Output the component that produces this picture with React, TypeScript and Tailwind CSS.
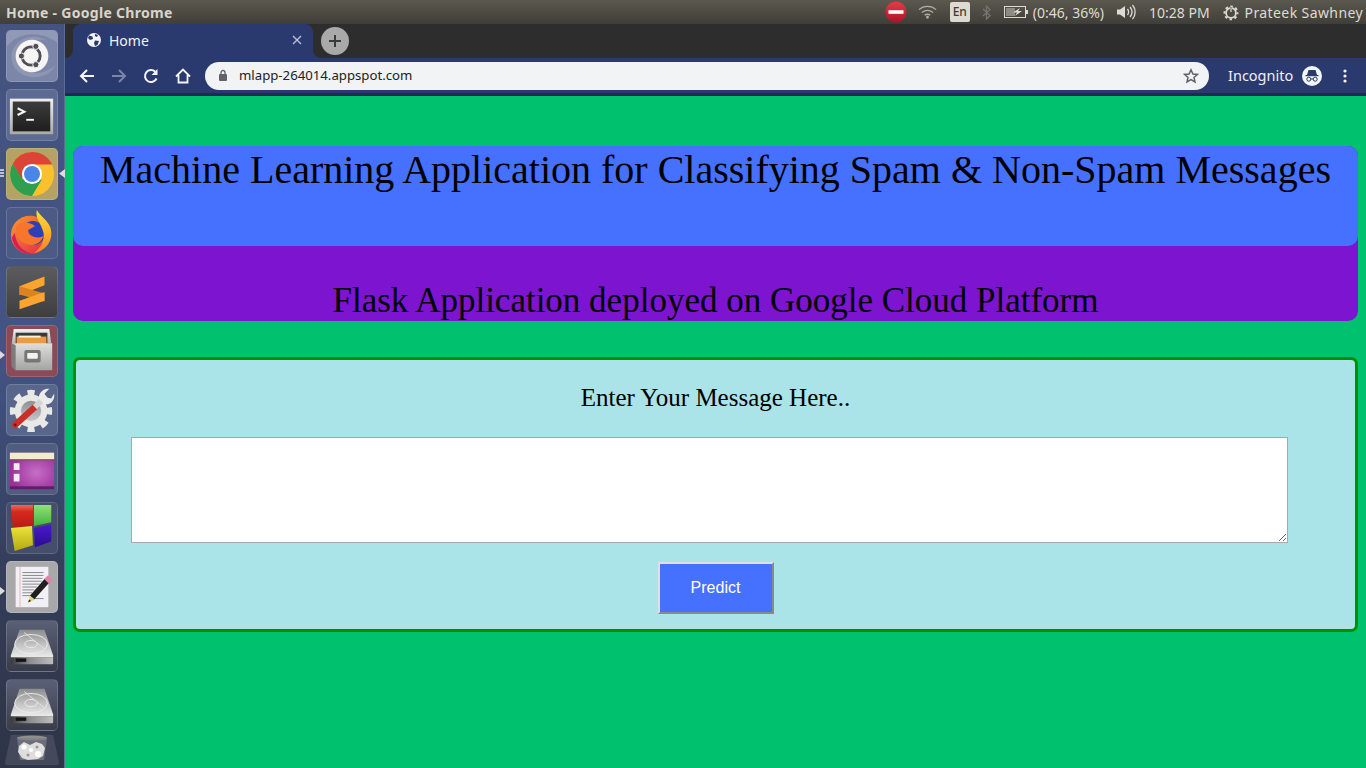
import React from "react";

const Tile = ({ children, className = "" }: { children: React.ReactNode; className?: string }) => (
  <div className={`w-[52px] h-[52px] rounded-[5px] border border-white/15 flex items-center justify-center shrink-0 overflow-hidden ${className}`}>
    {children}
  </div>
);

const UbuntuIcon = () => (
  <svg width="52" height="52" viewBox="0 0 52 52">
    <path d="M0 16C12 0 36 0 52 12V0H0Z" fill="#ffffff" opacity=".16" />
    <path d="M5 30C2 12 24 -1 42 10C30 6 12 14 15 30C18 46 36 48 50 36C42 54 8 52 5 30Z" fill="#ffffff" opacity=".14" />
    <circle cx="26" cy="26" r="17" fill="#f6f5f3" />
    <circle cx="25" cy="26" r="9.5" fill="none" stroke="#4f4f58" strokeWidth="3" />
    <circle cx="30" cy="16" r="3.2" fill="#4f4f58" stroke="#f6f5f3" strokeWidth="1" />
    <circle cx="15" cy="26" r="3.2" fill="#4f4f58" stroke="#f6f5f3" strokeWidth="1" />
    <circle cx="30" cy="35" r="3.2" fill="#4f4f58" stroke="#f6f5f3" strokeWidth="1" />
  </svg>
);

const TerminalIcon = () => (
  <svg width="52" height="52" viewBox="0 0 52 52">
    <defs>
      <linearGradient id="termFrame" x1="0" y1="0" x2="0" y2="1"><stop offset="0" stopColor="#f0f0ee" /><stop offset="1" stopColor="#a8a8a6" /></linearGradient>
      <linearGradient id="termBg" x1="0" y1="0" x2="0" y2="1"><stop offset="0" stopColor="#3c3c3c" /><stop offset="1" stopColor="#1e1e1e" /></linearGradient>
    </defs>
    <rect x="3" y="9" width="45" height="37" fill="url(#termFrame)" />
    <rect x="6" y="12" width="39" height="31" fill="url(#termBg)" />
    <path d="M11 19l7 3.5-7 3.5" fill="none" stroke="#f4f4f4" strokeWidth="2.2" />
    <rect x="20" y="30" width="8" height="2" fill="#f4f4f4" />
  </svg>
);

const ChromeIcon = () => (
  <svg width="52" height="52" viewBox="0 0 52 52">
    <circle cx="26" cy="26" r="23" fill="#fbc02d" />
    <path d="M26 3A23 23 0 0 0 6 15L15 31 26 16H47A23 23 0 0 0 26 3Z" fill="#db4437" />
    <path d="M6 15A23 23 0 0 0 26 49L36 32 16 31Z" fill="#2e9e4f" />
    <circle cx="26" cy="26" r="10.5" fill="#fff" />
    <circle cx="26" cy="26" r="8.3" fill="#4a86e8" />
  </svg>
);

const FirefoxIcon = () => (
  <svg width="52" height="52" viewBox="0 0 52 52">
    <defs>
      <linearGradient id="ffBody" x1="0" y1="0" x2="1" y2="1"><stop offset="0" stopColor="#ff9a2c" /><stop offset="1" stopColor="#e0214f" /></linearGradient>
      <linearGradient id="ffTail" x1="0" y1="0" x2="0" y2="1"><stop offset="0" stopColor="#ffe22c" /><stop offset="1" stopColor="#f7812c" /></linearGradient>
    </defs>
    <circle cx="24" cy="28" r="20" fill="url(#ffBody)" />
    <circle cx="27" cy="26" r="12.5" fill="#2f3fb5" />
    <path d="M10 18C15 14 24 14 29 19L22 23C22 29 30 33 38 29C35 38 24 41 17 36C10 31 8 24 10 18Z" fill="#f7762c" />
    <path d="M31 2C34 8 42 12 45 20C49 32 42 44 28 47C36 41 39 33 38 26C36 16 29 12 31 2Z" fill="url(#ffTail)" />
    <path d="M5 31C7 42 16 49 28 48C18 46 10 40 8 26Z" fill="#d81f55" />
  </svg>
);

const SublimeIcon = () => (
  <svg width="52" height="52" viewBox="0 0 52 52">
    <path d="M13 20L39 10V19L13 29Z" fill="#fba52f" />
    <path d="M13 28.5L39 36V27.5L13 20Z" fill="#d98420" />
    <path d="M13 35L39 26V35L13 44Z" fill="#fba52f" />
  </svg>
);

const FilesIcon = () => (
  <svg width="52" height="52" viewBox="0 0 52 52">
    <defs>
      <linearGradient id="fileFront" x1="0" y1="0" x2="0" y2="1"><stop offset="0" stopColor="#dededc" /><stop offset="1" stopColor="#a4a4a2" /></linearGradient>
      <linearGradient id="fileTop" x1="0" y1="0" x2="0" y2="1"><stop offset="0" stopColor="#f2f2f0" /><stop offset="1" stopColor="#b4b4b2" /></linearGradient>
    </defs>
    <path d="M7 3H44L46 18H5Z" fill="url(#fileTop)" />
    <rect x="9" y="7" width="33" height="12" fill="#3a3a3a" />
    <rect x="10" y="11" width="31" height="9" fill="#ec9a44" />
    <rect x="12" y="10" width="23" height="2" fill="#fff2dc" />
    <path d="M5 18H47V46H9L5 42Z" fill="url(#fileFront)" />
    <path d="M5 18L9 20V46L5 42Z" fill="#7c7c7a" />
    <rect x="18" y="25" width="17" height="13" rx="2" fill="#777775" />
    <rect x="21" y="28" width="11" height="6" rx="1" fill="#f2f2f0" />
  </svg>
);

const SettingsIcon = () => (
  <svg width="52" height="52" viewBox="0 0 52 52">
    <defs>
      <linearGradient id="hole" x1="0" y1="0" x2="0" y2="1"><stop offset="0" stopColor="#8d8f96" /><stop offset="1" stopColor="#c6c7cb" /></linearGradient>
    </defs>
    <circle cx="25" cy="27" r="17" fill="#e8e8e6" />
    <circle cx="25" cy="27" r="19" fill="none" stroke="#e8e8e6" strokeWidth="6" pathLength="16" strokeDasharray="1 1" strokeDashoffset="0.5" />
    <circle cx="25" cy="27" r="10.5" fill="url(#hole)" />
    <path d="M8.5 41.5L30 22" stroke="#c92f27" strokeWidth="6.5" strokeLinecap="round" />
    <circle cx="8.5" cy="41.5" r="1.5" fill="#7a1712" />
    <path d="M29 23L37 15" stroke="#d4d4d4" strokeWidth="6" />
    <path d="M33 14C33 8 38 3 44 4L39 9L41 13L46 14L49 9C50 15 46 21 39 20Z" fill="#ececec" />
  </svg>
);

const WorkspaceIcon = () => (
  <svg width="52" height="52" viewBox="0 0 52 52">
    <defs>
      <radialGradient id="wsBg" cx=".6" cy=".55" r=".6"><stop offset="0" stopColor="#c66fc6" /><stop offset="1" stopColor="#9a2f9a" /></radialGradient>
    </defs>
    <rect x="3" y="9" width="46" height="38" rx="2" fill="url(#wsBg)" />
    <rect x="3" y="9" width="46" height="7" fill="#f1eccd" />
    <rect x="3" y="16" width="46" height="1" fill="#6a5a40" />
    <rect x="3" y="44" width="46" height="3" fill="#5f1f66" />
    <rect x="7" y="20" width="6" height="7" fill="#f1eef3" />
    <rect x="7" y="31" width="6" height="8" fill="#f1eef3" />
  </svg>
);

const BlocksIcon = () => (
  <svg width="52" height="52" viewBox="0 0 52 52">
    <defs>
      <linearGradient id="bRed" x1="0" y1="0" x2="0" y2="1"><stop offset="0" stopColor="#ef6a5c" /><stop offset=".3" stopColor="#d8281f" /><stop offset="1" stopColor="#b91a16" /></linearGradient>
      <linearGradient id="bGreen" x1="0" y1="0" x2="0" y2="1"><stop offset="0" stopColor="#8fe07c" /><stop offset="1" stopColor="#44b43a" /></linearGradient>
      <linearGradient id="bYellow" x1="0" y1="0" x2="0" y2="1"><stop offset="0" stopColor="#ece33c" /><stop offset="1" stopColor="#b4aa12" /></linearGradient>
      <linearGradient id="bBlue" x1="0" y1="0" x2="0" y2="1"><stop offset="0" stopColor="#4a1bcc" /><stop offset="1" stopColor="#2c0a96" /></linearGradient>
    </defs>
    <path d="M4 2H27V24L6 26Z" fill="url(#bRed)" />
    <path d="M28 2H46V20L28 24Z" fill="url(#bGreen)" />
    <path d="M4 26L26 24L27 44L8 50Z" fill="url(#bYellow)" />
    <path d="M28 26L46 22V40L29 46Z" fill="url(#bBlue)" />
  </svg>
);

const EditorIcon = () => (
  <svg width="52" height="52" viewBox="0 0 52 52">
    <rect x="9" y="5" width="34" height="42" fill="#f0f0f5" />
    <rect x="13" y="5" width="1" height="42" fill="#eeb4b4" />
    <path d="M16 11H38M16 14H38M16 17H37M16 20H36M16 23H34M16 26H31M16 29H28M16 32H26M16 35H24M29 38H38" stroke="#85858c" strokeWidth="1" />
    <path d="M26 37L42 19" stroke="#1f1f1f" strokeWidth="6" />
    <path d="M41 20L45 16" stroke="#e47fae" strokeWidth="6.5" />
    <path d="M22 42L24 35L29 39Z" fill="#e7cf6a" />
    <path d="M22 42L23 39L25 40.5Z" fill="#222" />
  </svg>
);

const DriveIcon = ({ id }: { id: string }) => (
  <svg width="52" height="52" viewBox="0 0 52 52">
    <defs>
      <linearGradient id={id} x1="0" y1="0" x2="0" y2="1"><stop offset="0" stopColor="#8c8c8c" /><stop offset=".55" stopColor="#c4c4c4" /><stop offset="1" stopColor="#ececec" /></linearGradient>
      <linearGradient id={`${id}F`} x1="0" y1="0" x2="1" y2="0"><stop offset="0" stopColor="#3a3a3a" /><stop offset=".45" stopColor="#8e8e8e" /><stop offset="1" stopColor="#bdbdbd" /></linearGradient>
    </defs>
    <path d="M13 9H39L48 36V38H4V36Z" fill={`url(#${id})`} />
    <path d="M4 38H48V44Q48 45 47 45H5Q4 45 4 44Z" fill={`url(#${id}F)`} />
    <rect x="9" y="39" width="11" height="3.5" fill="#141414" />
    <ellipse cx="25" cy="24" rx="17" ry="10" fill="none" stroke="#eaeaea" strokeWidth="1" />
    <ellipse cx="25" cy="24" rx="6.5" ry="3.8" fill="none" stroke="#eaeaea" strokeWidth="1" />
    <path d="M18 12L40 30" stroke="#e0e0e0" strokeWidth="1" />
  </svg>
);

const TrashIcon = () => (
  <div className="w-[56px] h-[32px] shrink-0 flex items-center justify-center overflow-hidden">
    <svg width="56" height="32" viewBox="0 0 56 32">
      <path d="M7 1H49L55 29Q55 31 52 31H4Q1 31 1 29Z" fill="#ffffff" opacity=".1" stroke="#ffffff" strokeOpacity=".25" />
      <ellipse cx="28" cy="4" rx="15" ry="2.5" fill="#8f8f8d" />
      <path d="M13 4H43L40 26H16Z" fill="#7c7f8a" opacity=".7" />
      <path d="M15 12L20 8L26 11L32 8L38 10L41 14L39 22L34 25L24 26L18 24L14 18Z" fill="#dededc" />
      <circle cx="20" cy="13" r="2.5" fill="#fff" />
      <circle cx="34" cy="20" r="3" fill="#fff" />
      <circle cx="27" cy="16" r="2" fill="#fff" />
      <circle cx="24" cy="21" r="1.5" fill="#9a9a98" />
      <circle cx="33" cy="13" r="1.5" fill="#9a9a98" />
    </svg>
  </div>
);

const Dock = () => (
  <aside className="w-[65px] shrink-0 flex flex-col items-center gap-[7px] pt-[6px] pr-[1px] bg-[linear-gradient(180deg,#44537f_0%,#435383_45%,#353f5c_72%,#2e3446_100%)] border-r border-[#5c6c92] relative">
    <Tile className="bg-[#7b86a8]"><UbuntuIcon /></Tile>
    <Tile className="bg-[#5d6b92]"><TerminalIcon /></Tile>
    <Tile className="bg-[#b4a364]"><ChromeIcon /></Tile>
    <Tile className="bg-[#4c5b85]"><FirefoxIcon /></Tile>
    <Tile className="bg-[linear-gradient(180deg,#5c5c5e,#3e3e40)]"><SublimeIcon /></Tile>
    <Tile className="bg-[#8b4a58]"><FilesIcon /></Tile>
    <Tile className="bg-[#59668c]"><SettingsIcon /></Tile>
    <Tile className="bg-[#505c80]"><WorkspaceIcon /></Tile>
    <Tile className="bg-[#454e6a]"><BlocksIcon /></Tile>
    <Tile className="bg-[#a8a8aa]"><EditorIcon /></Tile>
    <Tile className="bg-[linear-gradient(180deg,#5a6076,#383c4a)]"><DriveIcon id="driveA" /></Tile>
    <Tile className="bg-[linear-gradient(180deg,#5a6076,#383c4a)]"><DriveIcon id="driveB" /></Tile>
    <div className="-mt-[4px]"><TrashIcon /></div>
    <svg className="absolute left-0 top-[145px]" width="5" height="8" viewBox="0 0 5 8"><path d="M0 1H4M0 4H4M0 7H4" stroke="#e8e8e8" strokeWidth="1.4" /></svg>
    <svg className="absolute left-[59px] top-[145px]" width="6" height="9" viewBox="0 0 6 9"><path d="M6 0L0 4.5L6 9Z" fill="#dcdcdc" /></svg>
    <svg className="absolute left-0 top-[327px]" width="5" height="8" viewBox="0 0 5 8"><path d="M0 0L5 4L0 8Z" fill="#dcdcdc" /></svg>
    <svg className="absolute left-0 top-[563px]" width="5" height="8" viewBox="0 0 5 8"><path d="M0 0L5 4L0 8Z" fill="#dcdcdc" /></svg>
  </aside>
);

const TopBar = () => (
  <header className="h-[24px] shrink-0 flex items-center justify-between bg-[linear-gradient(180deg,#5c584e,#3f3e39)] font-['Noto_Sans',sans-serif] text-[14px] text-[#dfdbd2]">
    <span className="pl-[6px] font-bold text-[#d8d4cb] tracking-[0.3px]">Home - Google Chrome</span>
    <div className="flex items-center pr-[3px]">
      <svg className="mr-[11px]" width="22" height="22" viewBox="0 0 22 22">
        <defs><linearGradient id="stop" x1="0" y1="0" x2="0" y2="1"><stop offset="0" stopColor="#ea3a44" /><stop offset="1" stopColor="#a8142a" /></linearGradient></defs>
        <circle cx="11" cy="11" r="10.5" fill="url(#stop)" /><rect x="3.5" y="9.2" width="15" height="3.6" fill="#fff" />
      </svg>
      <svg className="mr-[13px]" width="19" height="14" viewBox="0 0 20 14" fill="none" stroke="#b0ada4" strokeWidth="1.4"><path d="M1 4.5C6 0 14 0 19 4.5" /><path d="M4 7.5C8 4.5 12 4.5 16 7.5" /><path d="M7 10.3C9 9 11 9 13 10.3" /><circle cx="10" cy="12.5" r=".8" fill="#b0ada4" /></svg>
      <span className="mr-[12px] w-[20px] h-[20px] bg-[#dedad2] rounded-[2px] text-[#3c3b37] text-[12px] font-medium flex items-center justify-center">En</span>
      <svg className="mr-[13px]" width="9" height="15" viewBox="0 0 9 15" fill="none" stroke="#77746c" strokeWidth="1.3"><path d="M1 4L8 10.5L4.5 14V1L8 4.5L1 11" /></svg>
      <svg className="mr-[5px]" width="24" height="12" viewBox="0 0 24 12"><rect x=".5" y=".5" width="21" height="11" fill="none" stroke="#dfdbd2" /><rect x="2" y="2" width="9" height="8" fill="#8c8a82" /><path d="M16 2L9 6.5H13L11 10L18 5H14Z" fill="#dfdbd2" /><rect x="22" y="4" width="2" height="4" fill="#dfdbd2" /></svg>
      <span className="mr-[12px]">(0:46, 36%)</span>
      <svg className="mr-[13px]" width="20" height="16" viewBox="0 0 20 16" fill="none"><path d="M1 5.5H4L9 2V14L4 10.5H1Z" fill="#dfdbd2" /><path d="M11.5 5C13 7 13 9 11.5 11M14 3C16.5 6 16.5 10 14 13M16.5 1C20 5 20 11 16.5 15" stroke="#dfdbd2" strokeWidth="1.3" /></svg>
      <span className="mr-[13px] text-[14px]">10:28 PM</span>
      <svg className="mr-[6px]" width="16" height="18" viewBox="0 0 18 18" fill="none" stroke="#dfdbd2">
        <circle cx="9" cy="10" r="5.5" strokeWidth="2" />
        <circle cx="9" cy="10" r="7.3" strokeWidth="2.2" pathLength="16" strokeDasharray="1 1" strokeDashoffset="0.5" />
        <path d="M9 4V9" strokeWidth="2.4" stroke="#47453f" />
        <path d="M9 4.5V9" strokeWidth="1.4" />
      </svg>
      <span className="tracking-[0.4px]">Prateek Sawhney</span>
    </div>
  </header>
);

const TabStrip = () => (
  <div className="h-[34px] shrink-0 bg-[#2d2d2d] flex items-end pl-[8px] font-['Noto_Sans',sans-serif]">
    <div className="relative w-[240px] h-[34px] bg-[#2a3a6e] rounded-t-[8px] flex items-center pb-[2px] pl-[13px] pr-[11px] text-[14px] text-[#f0f2f8]">
      <div className="absolute -left-[8px] bottom-0 w-[8px] h-[8px] bg-[#2a3a6e]"><div className="w-full h-full bg-[#2d2d2d] rounded-br-[8px]" /></div>
      <div className="absolute -right-[8px] bottom-0 w-[8px] h-[8px] bg-[#2a3a6e]"><div className="w-full h-full bg-[#2d2d2d] rounded-bl-[8px]" /></div>
      <svg width="16" height="16" viewBox="0 0 16 16"><circle cx="8" cy="8" r="7" fill="#f3f4f7" /><path d="M3 3.5L6.5 4.5L7 7L4 8L2 6ZM9 8.5L13 9L11.5 13L9 14L8 11Z" fill="#2a3a6e" /><path d="M9 2L12 3L11 5L9 4Z" fill="#2a3a6e" /></svg>
      <span className="ml-[7px] flex-1">Home</span>
      <svg width="10" height="10" viewBox="0 0 10 10" stroke="#b8c0d6" strokeWidth="1.4"><path d="M1 1L9 9M9 1L1 9" /></svg>
    </div>
    <div className="ml-[8px] mb-[3px] w-[28px] h-[28px] rounded-full bg-[#a9a9a9] flex items-center justify-center">
      <svg width="14" height="14" viewBox="0 0 14 14" stroke="#3a3a3a" strokeWidth="2"><path d="M7 1V13M1 7H13" /></svg>
    </div>
  </div>
);

const Toolbar = () => (
  <div className="h-[35px] shrink-0 bg-[#2a3a6e] flex items-center pl-[14px] font-['Noto_Sans',sans-serif]">
    <svg width="16" height="16" viewBox="0 0 16 16" fill="none" stroke="#f5f6fa" strokeWidth="2"><path d="M15 8H2M8 2L2 8L8 14" /></svg>
    <svg className="ml-[16px]" width="16" height="16" viewBox="0 0 16 16" fill="none" stroke="#7b86a8" strokeWidth="2"><path d="M1 8H14M8 2L14 8L8 14" /></svg>
    <svg className="ml-[16px]" width="16" height="16" viewBox="0 0 16 16" fill="none" stroke="#f5f6fa" strokeWidth="2"><path d="M13.5 10.5A6 6 0 1 1 12.2 3.8" /><path d="M14.5 1V7H8.5Z" fill="#f5f6fa" stroke="none" /></svg>
    <svg className="ml-[16px]" width="16" height="16" viewBox="0 0 16 16" fill="none" stroke="#f5f6fa" strokeWidth="1.8"><path d="M1 8.5L8 1.5L15 8.5M3.5 7V14.5H12.5V7" /></svg>
    <div className="ml-[14px] w-[1004px] h-[28px] rounded-full bg-[#f1f3f4] flex items-center pl-[13px] pr-[10px] text-[#202124]">
      <svg width="10" height="13" viewBox="0 0 10 13"><rect x="1" y="5" width="8" height="7" rx="1" fill="#5f6368" /><path d="M3 5V3.5A2 2 0 0 1 7 3.5V5" fill="none" stroke="#5f6368" strokeWidth="1.3" /></svg>
      <span className="ml-[11px] flex-1 text-[13.2px]">mlapp-264014.appspot.com</span>
      <svg width="16" height="16" viewBox="0 0 16 16" fill="none" stroke="#5f6368" strokeWidth="1.5"><path d="M8 1.8L9.9 6L14.4 6.4L11 9.4L12 13.9L8 11.6L4 13.9L5 9.4L1.6 6.4L6.1 6Z" /></svg>
    </div>
    <span className="ml-[19px] text-[14.5px] text-[#eef0f6]">Incognito</span>
    <svg className="ml-[9px]" width="20" height="20" viewBox="0 0 20 20"><circle cx="10" cy="10" r="10" fill="#f3f4f7" /><path d="M5 9L6.5 4H13.5L15 9Z" fill="#2a3a6e" /><rect x="3.5" y="9" width="13" height="1.2" fill="#2a3a6e" /><circle cx="6.8" cy="13.2" r="2" fill="none" stroke="#2a3a6e" strokeWidth="1" /><circle cx="13.2" cy="13.2" r="2" fill="none" stroke="#2a3a6e" strokeWidth="1" /><path d="M8.8 13H11.2" stroke="#2a3a6e" /></svg>
    <svg className="ml-[21px]" width="4" height="14" viewBox="0 0 4 14" fill="#f3f4f7"><circle cx="2" cy="2" r="1.6" /><circle cx="2" cy="7" r="1.6" /><circle cx="2" cy="12" r="1.6" /></svg>
  </div>
);

const Page = () => (
  <main className="flex-1 bg-[#00c16e] px-[8px] pt-[50px] font-['Liberation_Serif',serif] text-black">
    <section className="rounded-[10px] bg-[#7c14d0] h-[175px] text-center">
      <div className="h-[100px] rounded-[10px] bg-[#4671ff] pt-[1px]">
        <h1 className="text-[40px] leading-[46px] font-normal">Machine Learning Application for Classifying Spam &amp; Non-Spam Messages</h1>
      </div>
      <h2 className="pt-[34px] text-[35px] leading-[41px] font-normal">Flask Application deployed on Google Cloud Platform</h2>
    </section>
    <section className="mt-[36px] h-[275px] rounded-[7px] border-[3px] border-[#009000] bg-[#aae3e8] flex flex-col items-center pt-[23px]">
      <p className="text-[25px] leading-[29px]">Enter Your Message Here..</p>
      <textarea className="mt-[25px] ml-[55px] self-start block w-[1157px] h-[106px] bg-white border border-[#a9a9a9] outline-none" />
      <button className="mt-[19px] w-[116px] h-[52px] bg-[#4671ff] text-white text-[16px] font-['Liberation_Sans',sans-serif] border-2 border-t-[#e0e0e0] border-l-[#e0e0e0] border-r-[#8a8a8a] border-b-[#8a8a8a]">Predict</button>
    </section>
  </main>
);

export default function App() {
  return (
    <div className="w-[1366px] h-[768px] overflow-hidden flex flex-col">
      <TopBar />
      <div className="flex-1 flex min-h-0">
        <Dock />
        <div className="flex-1 flex flex-col min-w-0">
          <TabStrip />
          <Toolbar />
          <div className="h-[3px] shrink-0 bg-[#1e2a50]" />
          <Page />
        </div>
      </div>
    </div>
  );
}
